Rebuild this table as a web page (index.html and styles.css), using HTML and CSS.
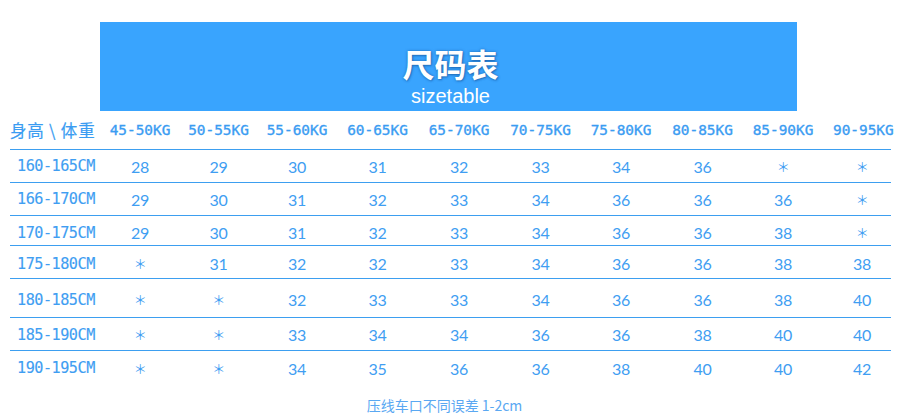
FILE: index.html
```html
<!DOCTYPE html>
<html lang="zh">
<head>
<meta charset="utf-8">
<link rel="stylesheet" href="styles.css">
</head>
<body>
<div class="banner">
  <div class="title">尺码表</div>
  <div class="subtitle">sizetable</div>
</div>
<div class="table">
  <div class="row head">
    <div class="lbl">身高 \ 体重</div>
    <div>45-50KG</div><div>50-55KG</div><div>55-60KG</div><div>60-65KG</div><div>65-70KG</div>
    <div>70-75KG</div><div>75-80KG</div><div>80-85KG</div><div>85-90KG</div><div>90-95KG</div>
  </div>
  <div class="row r1">
    <div class="lbl">160-165CM</div>
    <div>28</div><div>29</div><div>30</div><div>31</div><div>32</div><div>33</div><div>34</div><div>36</div><div class="na">＊</div><div class="na">＊</div>
  </div>
  <div class="row r2">
    <div class="lbl">166-170CM</div>
    <div>29</div><div>30</div><div>31</div><div>32</div><div>33</div><div>34</div><div>36</div><div>36</div><div>36</div><div class="na">＊</div>
  </div>
  <div class="row r3">
    <div class="lbl">170-175CM</div>
    <div>29</div><div>30</div><div>31</div><div>32</div><div>33</div><div>34</div><div>36</div><div>36</div><div>38</div><div class="na">＊</div>
  </div>
  <div class="row r4">
    <div class="lbl">175-180CM</div>
    <div class="na">＊</div><div>31</div><div>32</div><div>32</div><div>33</div><div>34</div><div>36</div><div>36</div><div>38</div><div>38</div>
  </div>
  <div class="row r5">
    <div class="lbl">180-185CM</div>
    <div class="na">＊</div><div class="na">＊</div><div>32</div><div>33</div><div>33</div><div>34</div><div>36</div><div>36</div><div>38</div><div>40</div>
  </div>
  <div class="row r6">
    <div class="lbl">185-190CM</div>
    <div class="na">＊</div><div class="na">＊</div><div>33</div><div>34</div><div>34</div><div>36</div><div>36</div><div>38</div><div>40</div><div>40</div>
  </div>
  <div class="row r7">
    <div class="lbl">190-195CM</div>
    <div class="na">＊</div><div class="na">＊</div><div>34</div><div>35</div><div>36</div><div>36</div><div>38</div><div>40</div><div>40</div><div>42</div>
  </div>
</div>
<div class="note">压线车口不同误差 1-2cm</div>
</body>
</html>
```

FILE: styles.css
```css
html, body {
  margin: 0;
  padding: 0;
  background: #ffffff;
}
body {
  width: 897px;
  height: 418px;
  overflow: hidden;
  font-family: "Noto Sans CJK SC", sans-serif;
}
.banner {
  margin: 22px 0 0 100px;
  width: 697px;
  height: 89px;
  box-sizing: border-box;
  padding-top: 23px;
  background: #39a4fe;
  display: flex;
  flex-direction: column;
  align-items: center;
  color: #ffffff;
}
.title {
  font-family: "Noto Sans CJK SC", sans-serif;
  font-weight: 700;
  font-size: 32px;
  line-height: 36px;
  margin-left: 4px;
  text-shadow: 0 0 3px rgba(20, 80, 150, 0.6), 1px 1px 2px rgba(20, 80, 150, 0.5);
}
.subtitle {
  font-family: "Liberation Sans", Arial, sans-serif;
  font-size: 20px;
  line-height: 22px;
  margin-top: 4px;
  margin-left: 4px;
}
.table {
  margin-left: 10px;
  width: 881px;
  color: #3f9ef2;
}
.row {
  display: grid;
  box-sizing: border-box;
  grid-template-columns: 90px 80px 77px 80px 81px 82px 81px 80px 83px 78px 69px;
  align-items: center;
  text-align: center;
  white-space: nowrap;
  font-family: "Lato", sans-serif;
  font-size: 16px;
  letter-spacing: -0.4px;
}
.row > div:last-child {
  padding-left: 11px;
}
.row + .row {
  border-top: 1px solid #3d9ff0;
}
.head {
  height: 38px;
  font-family: "DejaVu Sans Mono", "Noto Sans CJK SC", monospace;
  font-size: 14.4px;
  letter-spacing: 0;
  color: #3a9cf2;
  -webkit-text-stroke: 0.35px #3a9cf2;
}
.lbl {
  text-align: left;
  padding-left: 7px;
  font-family: "DejaVu Sans Mono", "Noto Sans CJK SC", monospace;
  font-size: 15.2px;
  letter-spacing: -0.5px;
  -webkit-text-stroke: 0.15px #3f9ef2;
}
.head .lbl {
  padding-left: 0;
  font-family: "Noto Sans CJK SC", sans-serif;
  font-size: 16.5px;
  letter-spacing: 0.8px;
  -webkit-text-stroke: 0.2px #3a9cf2;
}
.na {
  font-family: "Noto Sans CJK SC", sans-serif;
  font-size: 13px;
}
.r1 { height: 33px; }
.r2 { height: 33px; }
.r3 { height: 30px; padding-top: 4px; }
.r4 { height: 33px; padding-top: 3px; }
.r5 { height: 39px; padding-top: 3px; }
.r6 { height: 33px; padding-top: 1px; }
.r7 { height: 34px; padding-top: 1px; }
.note {
  margin-top: 13px;
  text-align: center;
  padding-right: 8px;
  font-family: "Noto Sans CJK SC", sans-serif;
  font-size: 14px;
  line-height: 16px;
  color: #5aa8f2;
}
```
